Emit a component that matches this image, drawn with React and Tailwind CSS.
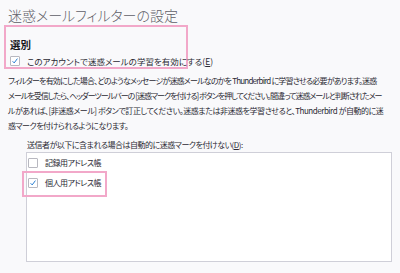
import React from 'react';

function Check({ checked }) {
  return (
    <span className="w-[10px] h-[10px] shrink-0 border border-[#b8b8c0] bg-white rounded-[1px] flex items-center justify-center">
      {checked && (
        <svg viewBox="0 0 10 10" className="w-[10px] h-[10px]">
          <path d="M2 5.3L4 7.4L8 2" fill="none" stroke="#1f78d1" strokeWidth="1.2" />
        </svg>
      )}
    </span>
  );
}

export default function App() {
  return (
    <div className="w-[400px] h-[273px] overflow-hidden whitespace-nowrap bg-[#f9f9fb] text-[#2b2a33] font-['Noto_Sans_CJK_JP',sans-serif] [font-feature-settings:'palt']">
      {/* 見出し */}
      <div className="pl-[8px] pt-[6px] text-[14px] leading-[18px] font-light text-[#5f5f68]">迷惑メールフィルターの設定</div>

      {/* 選別 */}
      <div className="ml-[4px] mt-[1px] w-[184px] h-[44px] border-[2px] border-[#f2a8c9] pl-[4px] pt-[11px]">
        <div className="text-[10.5px] leading-[13px] font-bold text-[#15141a]">選別</div>
        <label className="mt-[4px] flex items-center gap-[7px] text-[8.5px] leading-[12px]">
          <Check checked />
          <span>このアカウントで迷惑メールの学習を有効にする(<span className="underline">E</span>)</span>
        </label>
      </div>

      {/* 説明文: 行ごとに幅を合わせる */}
      <div className="pl-[8px] pt-[4px] text-[8px] leading-[15px] text-[#2b2a33] flex flex-col">
        <span className="tracking-[-0.8px]">フィルターを有効にした場合、どのようなメッセージが迷惑メールなのかを Thunderbird に学習させる必要があります。迷惑</span>
        <span className="tracking-[-1px]">メールを受信したら、ヘッダーツールバーの [迷惑マークを付ける] ボタンを押してください。間違って迷惑メールと判断されたメー</span>
        <span className="tracking-[-0.45px]">ルがあれば、[非迷惑メール] ボタンで訂正してください。迷惑または非迷惑を学習させると、Thunderbird が自動的に迷</span>
        <span className="tracking-[-0.5px]">惑マークを付けられるようになります。</span>
      </div>

      <div className="pl-[27px] pt-[5px] text-[8px] tracking-[-0.5px] leading-[13px]">
        送信者が以下に含まれる場合は自動的に迷惑マークを付けない(<span className="underline">D</span>):
      </div>

      <div className="ml-[26px] mt-[1px] w-[366px] h-[110px] border border-[#cfcfd8] bg-white pt-[4px]">
        <div className="flex items-center gap-[7px] pl-[1px] h-[12px] text-[8px] tracking-[-0.5px]">
          <Check />
          <span>記録用アドレス帳</span>
        </div>
        <div className="-ml-[5px] mt-[2px] w-[85px] h-[26px] border-[2px] border-[#f2a8c9] flex items-center gap-[7px] pl-[4px] pb-[3px] text-[8px] tracking-[-0.5px]">
          <Check checked />
          <span>個人用アドレス帳</span>
        </div>
      </div>
    </div>
  );
}
